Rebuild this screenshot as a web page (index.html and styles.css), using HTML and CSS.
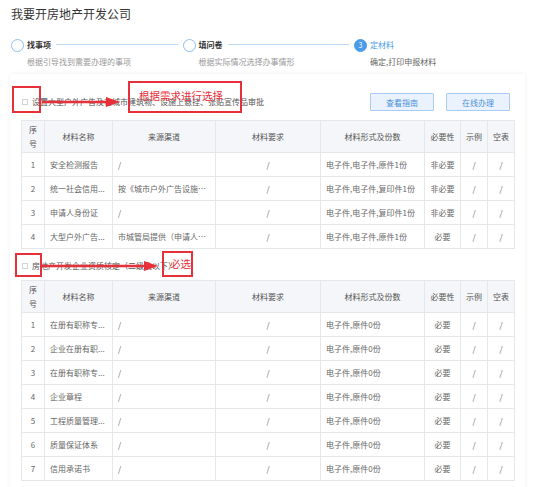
FILE: index.html
```html
<!DOCTYPE html>
<html lang="zh-CN">
<head>
<meta charset="utf-8">
<title>我要开房地产开发公司</title>
<link rel="stylesheet" href="styles.css">
</head>
<body>
<div class="page">
  <h1 class="title">我要开房地产开发公司</h1>
  <div class="steps">
    <div class="step">
      <div class="step-head"><span class="circle"></span><span class="step-label">找事项</span><span class="step-line"></span></div>
      <div class="step-desc">根据引导找到需要办理的事项</div>
    </div>
    <div class="step">
      <div class="step-head"><span class="circle"></span><span class="step-label">填问卷</span><span class="step-line"></span></div>
      <div class="step-desc">根据实际情况选择办事情形</div>
    </div>
    <div class="step step-last">
      <div class="step-head"><span class="circle circle-active">3</span><span class="step-label label-active">定材料</span></div>
      <div class="step-desc">确定,打印申报材料</div>
    </div>
  </div>

  <div class="card">
    <div class="section-head">
      <label class="check"><span class="box"></span>设置大型户外广告及在城市建筑物、设施上悬挂、张贴宣传品审批</label>
      <div class="actions">
        <button class="btn">查看指南</button>
        <button class="btn">在线办理</button>
      </div>
    </div>
    <table class="mat">
      <colgroup>
        <col class="c1"><col class="c2"><col class="c3"><col class="c4"><col class="c5"><col class="c6"><col class="c7"><col class="c8">
      </colgroup>
      <thead>
        <tr><th>序<br>号</th><th>材料名称</th><th>来源渠道</th><th>材料要求</th><th>材料形式及份数</th><th>必要性</th><th>示例</th><th>空表</th></tr>
      </thead>
      <tbody>
        <tr><td class="ctr">1</td><td class="ell">安全检测报告</td><td class="ell">/</td><td class="ctr">/</td><td class="ell">电子件,电子件,原件1份</td><td class="ctr">非必要</td><td class="ctr">/</td><td class="ctr">/</td></tr>
        <tr><td class="ctr">2</td><td class="ell">统一社会信用...</td><td class="ell">按《城市户外广告设施技...</td><td class="ctr">/</td><td class="ell">电子件,电子件,复印件1份</td><td class="ctr">非必要</td><td class="ctr">/</td><td class="ctr">/</td></tr>
        <tr><td class="ctr">3</td><td class="ell">申请人身份证</td><td class="ell">/</td><td class="ctr">/</td><td class="ell">电子件,电子件,复印件1份</td><td class="ctr">非必要</td><td class="ctr">/</td><td class="ctr">/</td></tr>
        <tr><td class="ctr">4</td><td class="ell">大型户外广告...</td><td class="ell">市城管局提供（申请人自...</td><td class="ctr">/</td><td class="ell">电子件,电子件,原件1份</td><td class="ctr">必要</td><td class="ctr">/</td><td class="ctr">/</td></tr>
      </tbody>
    </table>

    <div class="section-head sec2">
      <label class="check"><span class="box"></span>房地产开发企业资质核定（二级及以下）</label>
    </div>
    <table class="mat">
      <colgroup>
        <col class="c1"><col class="c2"><col class="c3"><col class="c4"><col class="c5"><col class="c6"><col class="c7"><col class="c8">
      </colgroup>
      <thead>
        <tr><th>序<br>号</th><th>材料名称</th><th>来源渠道</th><th>材料要求</th><th>材料形式及份数</th><th>必要性</th><th>示例</th><th>空表</th></tr>
      </thead>
      <tbody>
        <tr><td class="ctr">1</td><td class="ell">在册有职称专...</td><td class="ell">/</td><td class="ctr">/</td><td class="ell">电子件,原件0份</td><td class="ctr">必要</td><td class="ctr">/</td><td class="ctr">/</td></tr>
        <tr><td class="ctr">2</td><td class="ell">企业在册有职...</td><td class="ell">/</td><td class="ctr">/</td><td class="ell">电子件,原件0份</td><td class="ctr">必要</td><td class="ctr">/</td><td class="ctr">/</td></tr>
        <tr><td class="ctr">3</td><td class="ell">在册有职称专...</td><td class="ell">/</td><td class="ctr">/</td><td class="ell">电子件,原件0份</td><td class="ctr">必要</td><td class="ctr">/</td><td class="ctr">/</td></tr>
        <tr><td class="ctr">4</td><td class="ell">企业章程</td><td class="ell">/</td><td class="ctr">/</td><td class="ell">电子件,原件0份</td><td class="ctr">必要</td><td class="ctr">/</td><td class="ctr">/</td></tr>
        <tr><td class="ctr">5</td><td class="ell">工程质量管理...</td><td class="ell">/</td><td class="ctr">/</td><td class="ell">电子件,原件0份</td><td class="ctr">必要</td><td class="ctr">/</td><td class="ctr">/</td></tr>
        <tr><td class="ctr">6</td><td class="ell">质量保证体系</td><td class="ell">/</td><td class="ctr">/</td><td class="ell">电子件,原件0份</td><td class="ctr">必要</td><td class="ctr">/</td><td class="ctr">/</td></tr>
        <tr><td class="ctr">7</td><td class="ell">信用承诺书</td><td class="ell">/</td><td class="ctr">/</td><td class="ell">电子件,原件0份</td><td class="ctr">必要</td><td class="ctr">/</td><td class="ctr">/</td></tr>
      </tbody>
    </table>
  </div>

  <div class="mark mark-a1"></div>
  <div class="mark mark-a2"><span class="mark-text">根据需求进行选择</span></div>
  <div class="mark mark-a3"></div>
  <div class="mark mark-a4"><span class="mark-text">必选</span></div>
  <svg class="arrow arrow-1" width="80" height="12" viewBox="0 0 80 12"><line x1="0" y1="6" x2="68" y2="6" stroke="#e8303a" stroke-width="2.6"/><polygon points="64,1 78,6 64,11" fill="#e8303a"/></svg>
  <svg class="arrow arrow-2" width="118" height="12" viewBox="0 0 118 12"><line x1="0" y1="6" x2="106" y2="6" stroke="#e8303a" stroke-width="2.6"/><polygon points="102,1 116,6 102,11" fill="#e8303a"/></svg>
</div>
</body>
</html>
```

FILE: styles.css
```css
html, body {
  margin: 0;
  padding: 0;
  background: #ffffff;
}
body {
  font-family: "Noto Sans CJK SC", "Microsoft YaHei", sans-serif;
  color: #666;
}
.page {
  position: relative;
  padding: 6px 0 0 10px;
  width: 544px;
  height: 481px;
  overflow: hidden;
}
.title {
  margin: 0;
  padding-left: 1px;
  font-size: 12px;
  line-height: 15px;
  font-weight: normal;
  color: #333;
}
.steps {
  display: flex;
  margin-top: 17px;
  padding-left: 1px;
}
.step {
  width: 171.5px;
}
.step-head {
  display: flex;
  align-items: center;
  height: 14px;
}
.circle {
  box-sizing: border-box;
  width: 13px;
  height: 13px;
  border: 1.3px solid #8cc0f1;
  border-radius: 50%;
  flex: none;
  display: flex;
  align-items: center;
  justify-content: center;
  font-size: 7px;
  color: #fff;
}
.circle-active {
  background: #4a9be8;
  border-color: #4a9be8;
}
.step-label {
  margin-left: 3px;
  font-size: 8px;
  font-weight: bold;
  color: #333;
  line-height: 10px;
}
.label-active {
  color: #4a9be8;
  font-weight: normal;
}
.step-line {
  flex: 1;
  height: 1.5px;
  background: #bcd9f5;
  margin: 0 5px 1px 5px;
}
.step-desc {
  margin-top: 5px;
  padding-left: 16px;
  font-size: 8px;
  line-height: 10px;
  color: #999;
}
.step-last .step-desc {
  color: #666;
}
.card {
  box-sizing: border-box;
  margin-top: 7px;
  width: 515px;
  min-height: 420px;
  padding: 19px 11px 0 11px;
  background: #fff;
  box-shadow: 0 0 4px rgba(0, 0, 0, 0.07);
}
.section-head {
  display: flex;
  align-items: center;
  justify-content: space-between;
  height: 18px;
  margin-bottom: 9px;
}
.sec2 {
  margin-top: 8px;
  margin-bottom: 5px;
}
.check {
  display: flex;
  align-items: center;
  font-size: 8px;
  line-height: 10px;
  color: #555;
}
.box {
  box-sizing: border-box;
  width: 6px;
  height: 6px;
  border: 1px solid #d4d4d4;
  margin: 0 4px 0 1px;
  background: #fff;
}
.actions {
  display: flex;
  gap: 12px;
  margin-right: 4px;
}
.btn {
  box-sizing: border-box;
  width: 64px;
  height: 18px;
  padding: 0;
  background: #eaf3fd;
  border: 1px solid #a9cdf2;
  border-radius: 1px;
  font-family: inherit;
  font-size: 8px;
  color: #4a8fdb;
}
.mat {
  border-collapse: collapse;
  table-layout: fixed;
  width: 493px;
  font-size: 8px;
  color: #666;
}
.c1 { width: 23px; }
.c2 { width: 68px; }
.c3 { width: 103px; }
.c4 { width: 105px; }
.c5 { width: 104px; }
.c6 { width: 36px; }
.c7 { width: 27px; }
.c8 { width: 27px; }
.mat th, .mat td {
  border: 1px solid #e5e7eb;
  padding: 0 5px;
  line-height: 14px;
}
.mat th {
  height: 31px;
  background: #f4f6f9;
  font-weight: normal;
  color: #555;
  text-align: center;
  padding: 0 2px;
}
.mat td {
  height: 23px;
}
.ctr {
  text-align: center;
}
.ell {
  text-align: left;
  white-space: nowrap;
  overflow: hidden;
  text-overflow: ellipsis;
}
.mark {
  position: absolute;
  box-sizing: border-box;
  border: 2px solid #e8303a;
  display: flex;
  align-items: center;
}
.mark-text {
  color: #e8303a;
  font-size: 10.5px;
  line-height: 12px;
  white-space: nowrap;
}
.mark-a1 { left: 12px; top: 86px; width: 29px; height: 27px; }
.mark-a2 { left: 128px; top: 81px; width: 114px; height: 32px; padding: 0 0 3px 9px; }
.mark-a3 { left: 15px; top: 253px; width: 27px; height: 24px; }
.mark-a4 { left: 162px; top: 251px; width: 31px; height: 26px; padding: 0 0 1px 6px; }
.arrow {
  position: absolute;
}
.arrow-1 { left: 42px; top: 96px; }
.arrow-2 { left: 42px; top: 260px; }
```
